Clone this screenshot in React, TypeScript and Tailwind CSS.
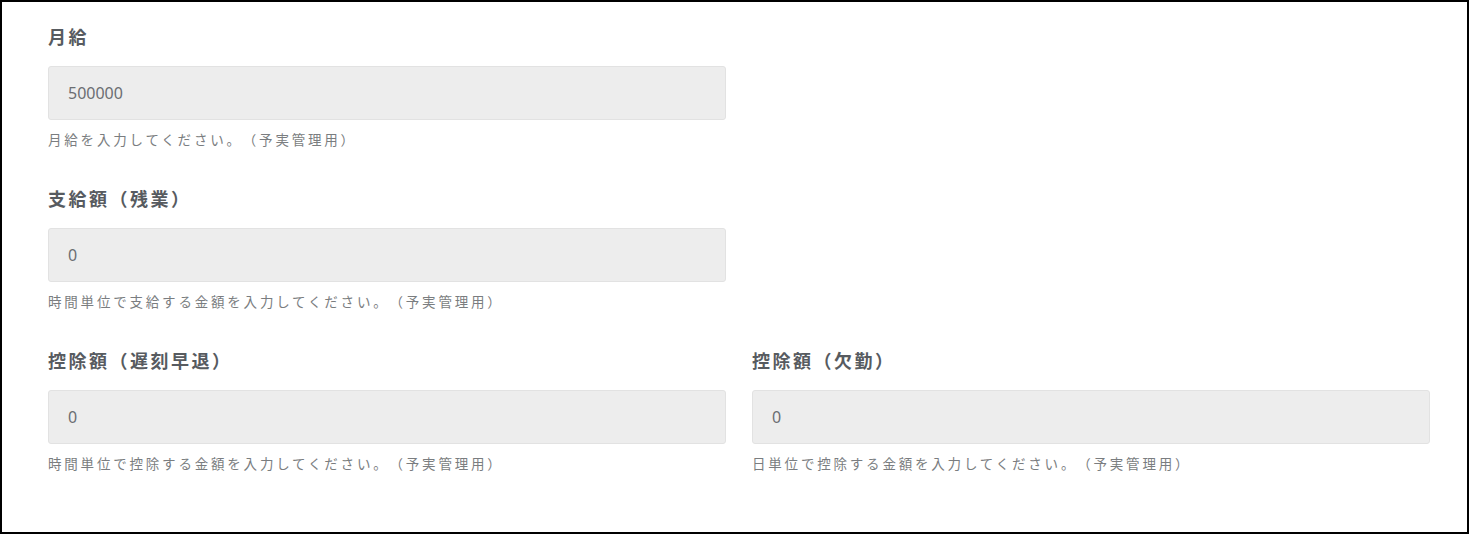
import React from 'react';

interface FieldProps {
  label: string;
  value: string;
  help: string;
}

const cjk = '"Noto Sans CJK JP", "Noto Sans", sans-serif';

const Field: React.FC<FieldProps> = ({ label, value, help }) => {
  return (
    <div className="flex flex-col">
      <label
        className="block h-[26px] text-[18px] leading-[24px] font-bold tracking-[2.5px] text-[#575b60] [text-spacing-trim:space-all]"
        style={{ fontFamily: cjk }}
      >
        {label}
      </label>
      <input
        type="text"
        readOnly
        value={value}
        className="mt-[16px] h-[54px] w-full rounded-[3px] border border-[#e2e2e2] bg-[#ededed] px-[19px] text-[16px] text-[#6b6e72] outline-none"
      />
      <p
        className="mt-[9px] h-[20px] text-[13.5px] leading-[20px] tracking-[2.8px] text-[#7a7d80] [text-spacing-trim:space-all]"
        style={{ fontFamily: cjk }}
      >
        {help}
      </p>
    </div>
  );
};

export default function App() {
  return (
    <div
      className="h-[534px] w-[1469px] border-2 border-black bg-white"
      style={{ fontFamily: '"Noto Sans", "Noto Sans CJK JP", sans-serif' }}
    >
      <div className="flex flex-col gap-[37px] pt-[22px] pl-[46px] pr-[37px]">
        <div className="grid grid-cols-2 gap-x-[26px]">
          <Field label="月給" value="500000" help="月給を入力してください。（予実管理用）" />
        </div>
        <div className="grid grid-cols-2 gap-x-[26px]">
          <Field
            label="支給額（残業）"
            value="0"
            help="時間単位で支給する金額を入力してください。（予実管理用）"
          />
        </div>
        <div className="grid grid-cols-2 gap-x-[26px]">
          <Field
            label="控除額（遅刻早退）"
            value="0"
            help="時間単位で控除する金額を入力してください。（予実管理用）"
          />
          <Field
            label="控除額（欠勤）"
            value="0"
            help="日単位で控除する金額を入力してください。（予実管理用）"
          />
        </div>
      </div>
    </div>
  );
}
